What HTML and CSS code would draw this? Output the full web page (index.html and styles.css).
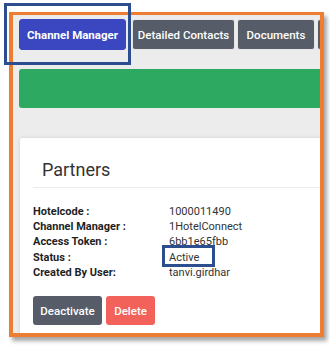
FILE: index.html
```html
<!DOCTYPE html>
<html>
<head>
<meta charset="utf-8">
<link rel="stylesheet" href="styles.css">
</head>
<body>
<div class="frame">
  <div class="inner">
    <div class="tabs">
      <div class="tab tab-active">Channel Manager</div>
      <div class="tab tab-dc">Detailed Contacts</div>
      <div class="tab tab-doc">Documents</div>
      <div class="tab tab-more"></div>
    </div>
    <div class="banner"></div>
    <div class="card">
      <div class="card-head">
        <h2 class="card-title">Partners</h2>
      </div>
      <div class="details">
        <div class="label">Hotelcode :</div><div class="value">1000011490</div>
        <div class="label">Channel Manager :</div><div class="value">1HotelConnect</div>
        <div class="label">Access Token :</div><div class="value">6bb1e65fbb</div>
        <div class="label">Status :</div><div class="value">Active</div>
        <div class="label">Created By User:</div><div class="value">tanvi.girdhar</div>
      </div>
      <div class="actions">
        <button class="btn btn-dark">Deactivate</button>
        <button class="btn btn-red">Delete</button>
      </div>
    </div>
  </div>
</div>
<div class="mark mark-tab"></div>
<div class="mark mark-status"></div>
</body>
</html>
```

FILE: styles.css
```css
html, body {
  margin: 0;
  padding: 0;
  background: #ffffff;
  width: 330px;
  height: 346px;
  overflow: hidden;
  font-family: Roboto, "Liberation Sans", Arial, sans-serif;
}

.frame {
  position: absolute;
  left: 9px;
  top: 12px;
  width: 307px;
  height: 318px;
  border: 4px solid #ed7d31;
  border-top-width: 3px;
  box-shadow: 3px 4px 4px rgba(0, 0, 0, 0.35);
  background: #ececec;
  overflow: hidden;
}

.inner {
  padding: 4px 0 0 6px;
  width: 420px;
}

.tabs {
  display: flex;
  align-items: stretch;
  height: 31px;
}

.tab {
  display: flex;
  align-items: center;
  justify-content: center;
  box-sizing: border-box;
  height: 31px;
  border-radius: 3px;
  background: #565d69;
  color: #ffffff;
  font-size: 11.5px;
  font-weight: 500;
  border: 1px solid #e6e6e6;
  margin-right: 2px;
  white-space: nowrap;
}

.tab-active {
  background: #3a47c1;
  border-color: #3a47c1;
  font-weight: 700;
  width: 107px;
  margin-right: 6px;
}

.tab-dc { width: 103px; }
.tab-doc { width: 78px; }
.tab-more { width: 80px; }

.banner {
  margin-top: 19px;
  height: 39px;
  border-radius: 3px;
  background: #2ea962;
  width: 400px;
}

.card {
  margin-top: 30px;
  margin-left: 1px;
  background: #ffffff;
  width: 400px;
  height: 240px;
  border-radius: 2px;
  box-shadow: 0 0 4px rgba(0, 0, 0, 0.12);
  padding: 0 0 0 13px;
  box-sizing: border-box;
}

.card-head {
  padding: 21px 0 7px 9px;
  border-bottom: 1px solid #ececec;
}

.card-title {
  margin: 0;
  font-size: 18px;
  font-weight: 400;
  line-height: 21px;
  color: #333333;
}

.details {
  display: grid;
  grid-template-columns: 136px 1fr;
  padding-top: 16px;
  font-size: 11px;
  line-height: 15.2px;
}

.label {
  font-weight: 700;
  color: #1f1f1f;
}

.value {
  color: #333333;
}

.actions {
  display: flex;
  gap: 4px;
  margin-top: 16px;
}

.btn {
  border: none;
  border-radius: 3px;
  height: 29px;
  padding: 0;
  color: #ffffff;
  font-family: Roboto, "Liberation Sans", Arial, sans-serif;
  font-size: 11.5px;
  font-weight: 500;
}

.btn-dark {
  width: 69px;
  background: #565d69;
}

.btn-red {
  width: 49px;
  background: #f2625a;
}

.mark {
  position: absolute;
  border: 3px solid #2d4e8e;
  box-sizing: border-box;
}

.mark-tab {
  left: 4px;
  top: 3px;
  width: 127px;
  height: 62px;
}

.mark-status {
  left: 162px;
  top: 245px;
  width: 53px;
  height: 22px;
}
```
